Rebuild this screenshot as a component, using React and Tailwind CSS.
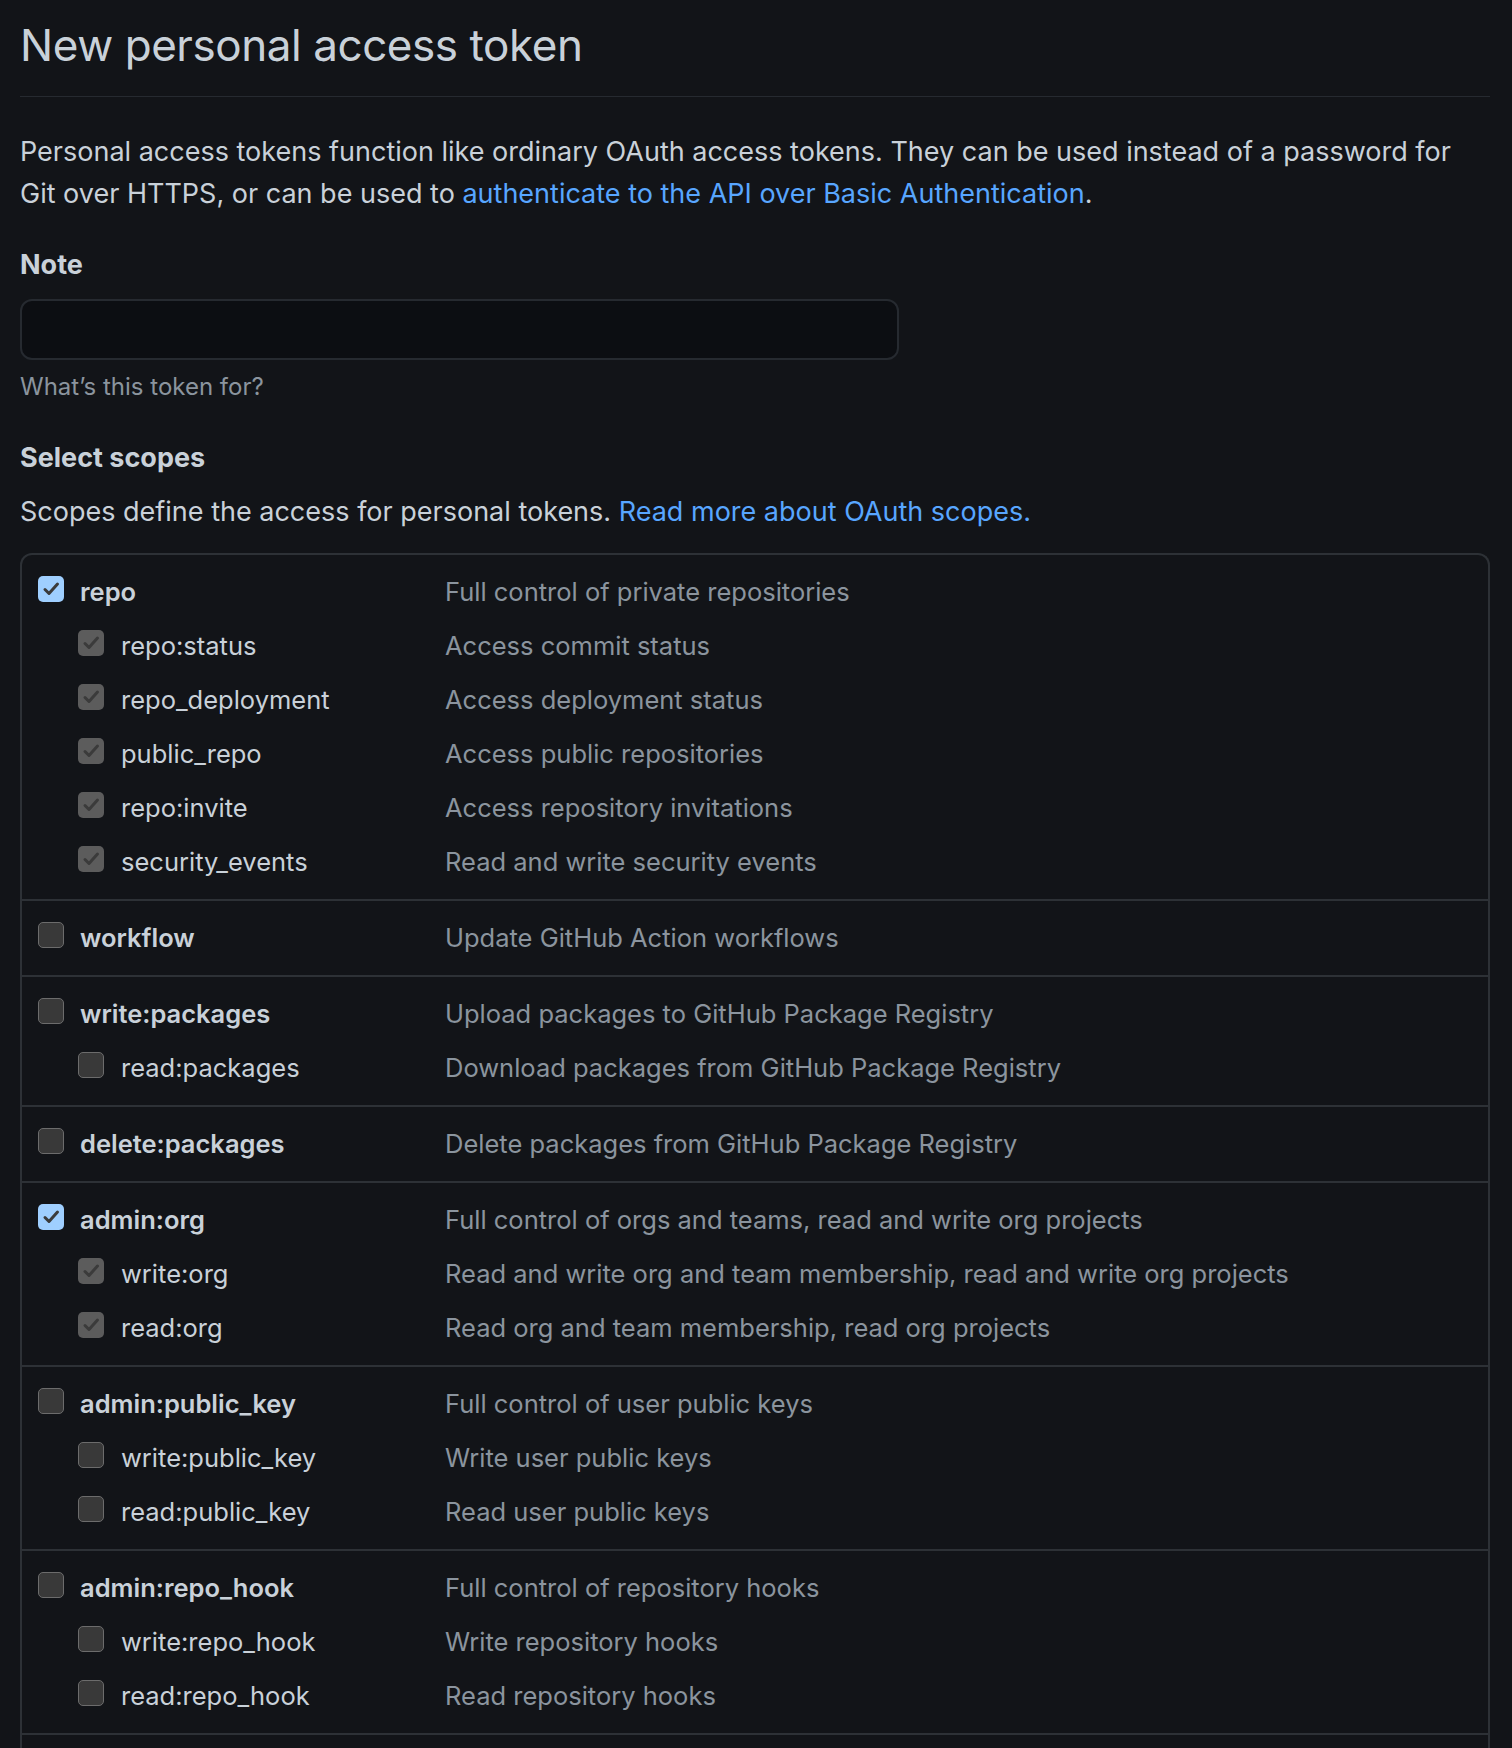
import React from 'react';

const groups = [
  {
    name: 'repo',
    desc: 'Full control of private repositories',
    checked: true,
    children: [
      ['repo:status', 'Access commit status'],
      ['repo_deployment', 'Access deployment status'],
      ['public_repo', 'Access public repositories'],
      ['repo:invite', 'Access repository invitations'],
      ['security_events', 'Read and write security events'],
    ],
  },
  { name: 'workflow', desc: 'Update GitHub Action workflows', children: [] },
  {
    name: 'write:packages',
    desc: 'Upload packages to GitHub Package Registry',
    children: [['read:packages', 'Download packages from GitHub Package Registry']],
  },
  { name: 'delete:packages', desc: 'Delete packages from GitHub Package Registry', children: [] },
  {
    name: 'admin:org',
    desc: 'Full control of orgs and teams, read and write org projects',
    checked: true,
    children: [
      ['write:org', 'Read and write org and team membership, read and write org projects'],
      ['read:org', 'Read org and team membership, read org projects'],
    ],
  },
  {
    name: 'admin:public_key',
    desc: 'Full control of user public keys',
    children: [
      ['write:public_key', 'Write user public keys'],
      ['read:public_key', 'Read user public keys'],
    ],
  },
  {
    name: 'admin:repo_hook',
    desc: 'Full control of repository hooks',
    children: [
      ['write:repo_hook', 'Write repository hooks'],
      ['read:repo_hook', 'Read repository hooks'],
    ],
  },
];

function Check({ state }) {
  if (state === 'checked' || state === 'disabled') {
    const bg = state === 'checked' ? 'bg-[#9fcfff]' : 'bg-[#5c5c5c]';
    return (
      <span className={`flex items-center justify-center w-[26px] h-[26px] rounded-[5px] shrink-0 mb-[6px] ${bg}`}>
        <svg width="20" height="20" viewBox="0 0 20 20" fill="none">
          <path d="M4 10.5l4 4L16.5 5" stroke="#3b3b3b" strokeWidth="3" strokeLinecap="round" strokeLinejoin="round" />
        </svg>
      </span>
    );
  }
  return (
    <span className="block w-[26px] h-[26px] rounded-[5px] shrink-0 mb-[6px] bg-[#393939] border-[1.5px] border-[#6c6c6c]" />
  );
}

function Row({ name, desc, state, sub }) {
  return (
    <div className="flex items-center h-[54px]">
      <div className={`flex items-center w-[407px] shrink-0 ${sub ? 'pl-[40px] gap-[17px]' : 'gap-[16px]'}`}>
        <Check state={state} />
        <span className={sub ? 'text-[#c9d1d9]' : 'text-[#c9d1d9] font-semibold'}>{name}</span>
      </div>
      <span className="text-[#8b949e]">{desc}</span>
    </div>
  );
}

export default function App() {
  return (
    <div className="flex flex-col h-[1748px] overflow-hidden bg-[#121418] pl-[20px] pr-[22px] font-['Inter',sans-serif] text-[27px] text-[#c9d1d9]">
      <h1 className="pt-[15px] pb-[21px] border-b border-[#262a30] text-[44px] leading-[60px] font-normal tracking-[-0.01em]">
        New personal access token
      </h1>

      <p className="mt-[34px] leading-[42px]">
        Personal access tokens function like ordinary OAuth access tokens. They can be used instead of a password for
        Git over HTTPS, or can be used to{' '}
        <a className="text-[#58a6ff]">authenticate to the API over Basic Authentication</a>.
      </p>

      <div className="mt-[29px] leading-[42px] font-bold">Note</div>
      <div className="mt-[13px] w-[879px] h-[61px] shrink-0 rounded-[12px] border-[2px] border-[#262a30] bg-[#0c0e12]" />
      <div className="mt-[9px] leading-[36px] text-[24px] text-[#8b949e]">What’s this token for?</div>

      <div className="mt-[32px] leading-[42px] font-bold">Select scopes</div>
      <p className="mt-[12px] leading-[42px]">
        Scopes define the access for personal tokens. <a className="text-[#58a6ff]">Read more about OAuth scopes.</a>
      </p>

      <div className="flex-1 mt-[20px] border-[2px] border-b-0 border-[#2d3136] rounded-t-[12px] text-[25.5px]">
        {groups.map((g) => (
          <div
            key={g.name}
            className="-mx-[2px] pl-[18px] pr-[2px] pt-[10px] pb-[10px] border-b-[2px] border-[#2d3136]"
          >
            <Row name={g.name} desc={g.desc} state={g.checked ? 'checked' : 'empty'} />
            {g.children.map(([n, d]) => (
              <Row key={n} name={n} desc={d} state={g.checked ? 'disabled' : 'empty'} sub />
            ))}
          </div>
        ))}
      </div>
    </div>
  );
}
